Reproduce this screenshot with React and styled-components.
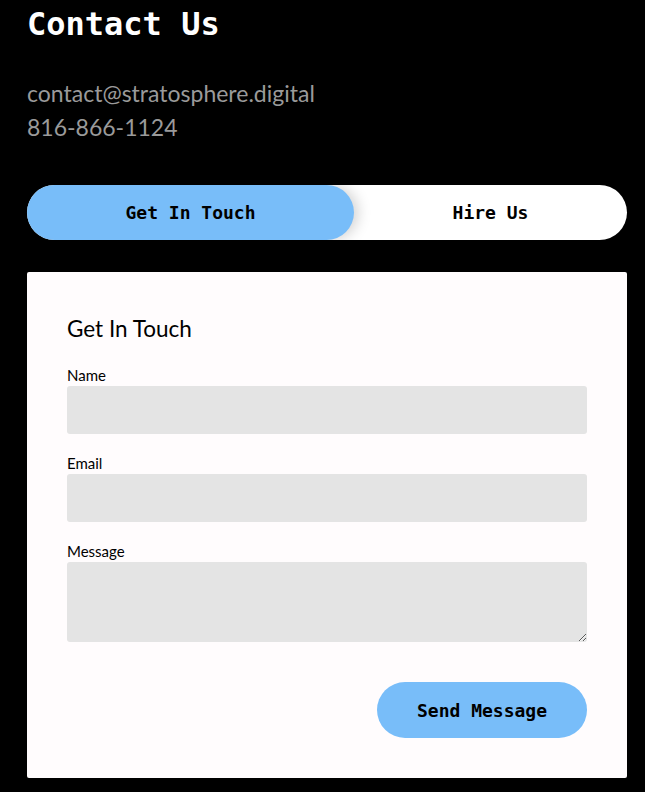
import React, { useState } from "react";
import styled, { createGlobalStyle } from "styled-components";

const Global = createGlobalStyle`
  html, body { margin: 0; padding: 0; background: #000; }
  body { font-family: "Lato", "Noto Sans", sans-serif; }
  * { box-sizing: border-box; }
`;

const mono = `"DejaVu Sans Mono", "Liberation Mono", monospace`;

const Page = styled.div`
  padding: 0 18px 14px 27px;
  background: #000;
  min-height: 792px;
`;

const Title = styled.h1`
  margin: 4px 0 0;
  font-family: ${mono};
  font-weight: 700;
  font-size: 32px;
  line-height: 40px;
  color: #fff;
`;

const ContactInfo = styled.div`
  margin-top: 32px;
  display: flex;
  flex-direction: column;
`;

const InfoLine = styled.div`
  font-size: 23px;
  line-height: 34px;
  color: #9a9a9a;
`;

const Tabs = styled.div`
  margin-top: 41px;
  display: flex;
  height: 55px;
  background: #fff;
  border-radius: 28px;
`;

const Tab = styled.button`
  flex: ${(p) => (p.$active ? "0 0 327px" : "1 1 auto")};
  border: 0;
  border-radius: 28px;
  background: ${(p) => (p.$active ? "#78bdf9" : "transparent")};
  box-shadow: ${(p) => (p.$active ? "4px 0 14px rgba(0,0,0,0.18)" : "none")};
  font-family: ${mono};
  font-weight: 700;
  font-size: 18px;
  color: #000;
  cursor: pointer;
  position: relative;
  z-index: ${(p) => (p.$active ? 1 : 0)};
`;

const Card = styled.form`
  margin-top: 32px;
  background: #fffcfd;
  border-radius: 2px;
  padding: 40px;
  display: flex;
  flex-direction: column;
`;

const CardTitle = styled.h2`
  margin: 2px 0 22px;
  font-weight: 400;
  font-size: 22.5px;
  line-height: 30px;
  color: #000;
`;

const Field = styled.div`
  display: flex;
  flex-direction: column;
  margin-bottom: 20px;
`;

const Label = styled.label`
  font-size: 15px;
  line-height: 18px;
  padding-bottom: 2px;
  color: #000;
`;

const Input = styled.input`
  height: 48px;
  border: 0;
  border-radius: 3px;
  background: #e4e4e4;
  outline: none;
  padding: 0 12px;
`;

const TextArea = styled.textarea`
  height: 80px;
  border: 0;
  border-radius: 3px;
  background: #e4e4e4;
  outline: none;
  padding: 8px 12px;
  resize: vertical;
  display: block;
`;

const Actions = styled.div`
  display: flex;
  justify-content: flex-end;
  margin-top: 20px;
`;

const SendButton = styled.button`
  width: 210px;
  height: 56px;
  border: 0;
  border-radius: 28px;
  background: #78bdf9;
  font-family: ${mono};
  font-weight: 700;
  font-size: 18px;
  color: #000;
  cursor: pointer;
`;

export default function App() {
  const [tab, setTab] = useState("touch");
  return (
    <Page>
      <Global />
      <Title>Contact Us</Title>
      <ContactInfo>
        <InfoLine>contact@stratosphere.digital</InfoLine>
        <InfoLine>816-866-1124</InfoLine>
      </ContactInfo>
      <Tabs>
        <Tab $active={tab === "touch"} onClick={() => setTab("touch")}>Get In Touch</Tab>
        <Tab $active={tab === "hire"} onClick={() => setTab("hire")}>Hire Us</Tab>
      </Tabs>
      <Card onSubmit={(e) => e.preventDefault()}>
        <CardTitle>Get In Touch</CardTitle>
        <Field>
          <Label>Name</Label>
          <Input type="text" />
        </Field>
        <Field>
          <Label>Email</Label>
          <Input type="email" />
        </Field>
        <Field>
          <Label>Message</Label>
          <TextArea />
        </Field>
        <Actions>
          <SendButton type="submit">Send Message</SendButton>
        </Actions>
      </Card>
    </Page>
  );
}
